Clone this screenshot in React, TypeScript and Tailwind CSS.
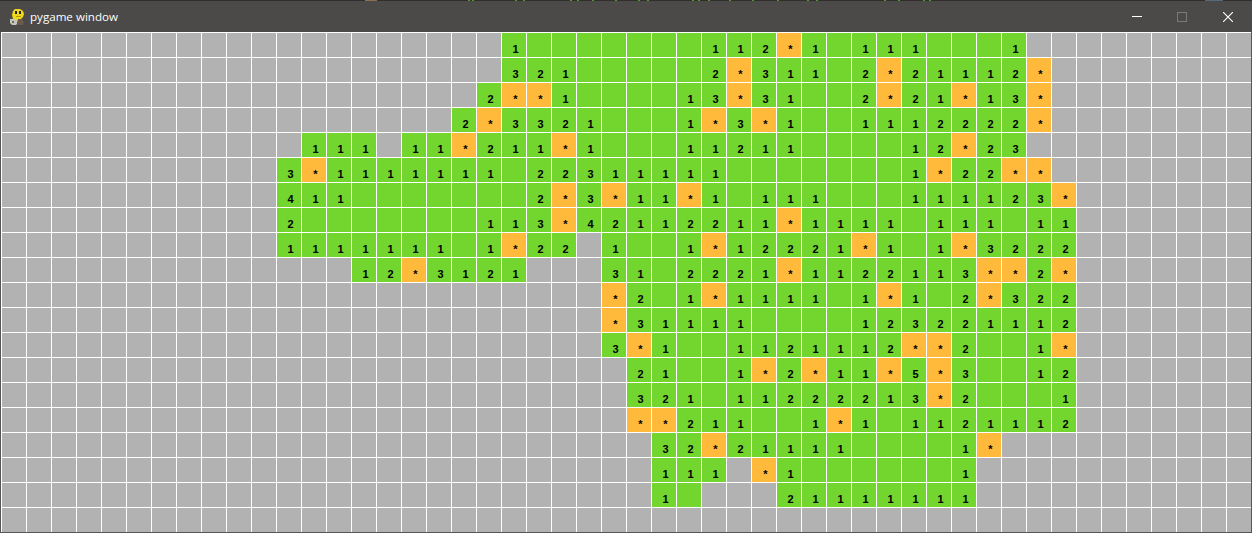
const rows: { from: number; cells: string }[] = [
  { from: 20, cells: "1_______112*1_111___1" },
  { from: 20, cells: "321_____2*311_2*21112*" },
  { from: 19, cells: "2**1____13*31__2*21*13*" },
  { from: 18, cells: "2*3321___1*3*1__1112222*" },
  { from: 12, cells: "111#11*211*1___11211____12*23" },
  { from: 11, cells: "3*1111111_22311111_______1*22**" },
  { from: 11, cells: "411_______2*3*11*1_111___111123*" },
  { from: 11, cells: "2_______113*42112211*1111_111_11" },
  { from: 11, cells: "1111111_1*22#1__1*12221*1_1*3222" },
  { from: 14, cells: "12*3121###31_2221*1122113**2*" },
  { from: 24, cells: "*2_1*1111_1*1_2*322" },
  { from: 24, cells: "*31111____123221112" },
  { from: 24, cells: "3*1__1121112**2__1*" },
  { from: 25, cells: "21__1*2*11*5*3__12" },
  { from: 25, cells: "321_11222213*2___1" },
  { from: 25, cells: "**211__1*1_1121112" },
  { from: 26, cells: "32*21111____1*" },
  { from: 26, cells: "111#*1______1" },
  { from: 26, cells: "1_###21111111" },
  { from: 0, cells: "" },
];

const COLS = 50;

// bits of the window behind that peek over the top edge
const topTicks = [468, 472, 515, 523, 570, 577, 592, 615, 638, 647, 692, 698, 708, 729, 752, 777, 807, 816, 884, 898, 923, 929];

function Cell({ value }: { value: string }) {
  if (value === "#") return <div className="h-6 w-6 bg-[#b2b2b2]" />;
  const bg = value === "*" ? "bg-[#ffb93b]" : "bg-[#72d62f]";
  return (
    <div className={`h-6 w-6 pl-[3px] pt-[10px] text-center text-[11px] font-bold leading-[12px] text-black ${bg}`}>
      {value === "_" ? "" : value}
    </div>
  );
}

function PygameIcon() {
  return (
    <svg width="16" height="18" viewBox="0 0 16 18" className="ml-[9px] shrink-0">
      <path d="M4 3l2-2h5l3 2 1 3-1 3-2 2-1 3H6L4 11 3 7z" fill="#f0d818" />
      <path d="M1 11h6l1 2v3l-1 1H3l-2-2z" fill="#c4c4b8" />
      <path d="M3 13h2v2H3z" fill="#6d6d64" />
      <path d="M9 11h4l2 3-1 3H9l-1-2z" fill="#6a5a4c" />
      <rect x="6" y="3" width="2" height="3" fill="#26241c" />
      <rect x="10" y="3" width="2" height="3" fill="#26241c" />
      <rect x="7" y="8" width="5" height="1" fill="#b09a12" />
    </svg>
  );
}

function TitleBar() {
  return (
    <div className="relative flex h-8 items-center justify-between border-t border-t-[#2f2e2d] bg-[#4b4a48] font-['Open_Sans',sans-serif] text-[11.6px] text-white">
      {topTicks.map((x) => (
        <span key={x} className="absolute top-[-1px] h-px w-[2px] bg-[#4f9a2c]" style={{ left: x }} />
      ))}
      <span className="absolute left-[365px] top-[-1px] h-px w-3 bg-[#8a6f50]" />
      <span className="absolute left-[1205px] top-[-1px] h-px w-[18px] bg-[#56697a]" />
      <div className="flex items-center gap-[5px]">
        <PygameIcon />
        <span>pygame window</span>
      </div>
      <div className="mr-px flex h-full items-center">
        <div className="flex h-full w-[44px] items-center justify-center">
          <div className="h-px w-[10px] bg-white" />
        </div>
        <div className="flex h-full w-[46px] items-center justify-center">
          <div className="h-[10px] w-[10px] border border-[#7a7977]" />
        </div>
        <div className="flex h-full w-[46px] items-center justify-center">
          <svg width="10" height="10" viewBox="0 0 10 10" stroke="white" strokeWidth="1.1">
            <path d="M0 0l10 10M10 0L0 10" />
          </svg>
        </div>
      </div>
    </div>
  );
}

export default function App() {
  return (
    <div className="h-[533px] w-[1252px] overflow-hidden bg-[#575655] font-['Liberation_Sans',Arial,sans-serif]">
      <TitleBar />
      <div className="ml-px grid w-[1250px] grid-cols-[repeat(50,24px)] gap-px bg-white pl-px pt-px">
        {rows.flatMap((row, r) =>
          Array.from({ length: COLS }, (_, c) => (
            <Cell key={`${r}-${c}`} value={row.cells[c - row.from] ?? "#"} />
          )),
        )}
      </div>
    </div>
  );
}
